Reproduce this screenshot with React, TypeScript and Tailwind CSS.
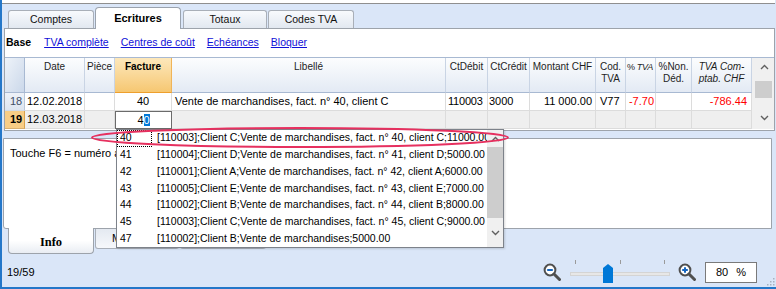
import React from 'react';

const GRID = 'grid grid-cols-[20px_60px_30px_57px_274px_42px_42px_66px_30px_30px_36px_60px]';

// header cell look
const hdrBase =
  'border-r border-b border-r-[#c9d4e4] border-b-[#a8b9d2] bg-linear-to-b from-[#fcfdfe] to-[#e3eaf4] leading-[12px] text-[#1e1e1e] text-center pt-[3px] whitespace-nowrap';
const hdr = hdrBase + ' text-[10px] overflow-hidden';

const cell = 'border-r border-b border-[#dcdcdc] text-[11px] leading-[17px] whitespace-nowrap overflow-hidden';
const cell19 = cell + ' bg-[#efefef]';

const popupRows = [
  ['40', '[110003];Client C;Vente de marchandises, fact. n° 40, client C;11000.00'],
  ['41', '[110004];Client D;Vente de marchandises, fact. n° 41, client D;5000.00'],
  ['42', '[110001];Client A;Vente de marchandises, fact. n° 42, client A;6000.00'],
  ['43', '[110005];Client E;Vente de marchandises, fact. n° 43, client E;7000.00'],
  ['44', '[110002];Client B;Vente de marchandises, fact. n° 44, client B;8000.00'],
  ['45', '[110003];Client C;Vente de marchandises, fact. n° 45, client C;9000.00'],
  ['47', '[110002];Client B;Vente de marchandises;5000.00'],
];

const Chevron = ({ up }: { up?: boolean }) => (
  <svg width="9" height="6" viewBox="0 0 9 6">
    <polyline
      points={up ? '1,5 4.5,1.5 8,5' : '1,1 4.5,4.5 8,1'}
      fill="none"
      stroke="#606060"
      strokeWidth="1.4"
    />
  </svg>
);

const Magnifier = ({ plus }: { plus?: boolean }) => (
  <svg width="18" height="18" viewBox="0 0 18 18">
    <circle cx="7" cy="7" r="5.4" fill="white" stroke="#4f4f4f" strokeWidth="2" />
    <line x1="11" y1="11" x2="16.5" y2="16.5" stroke="#4f4f4f" strokeWidth="3" strokeLinecap="round" />
    <line x1="4.2" y1="7" x2="9.8" y2="7" stroke="#1565c0" strokeWidth="2" />
    {plus && <line x1="7" y1="4.2" x2="7" y2="9.8" stroke="#1565c0" strokeWidth="2" />}
  </svg>
);

const TopTab = ({ label, active, w }: { label: string; active?: boolean; w: string }) =>
  active ? (
    <div className={`relative z-10 -mb-px h-[22px] ${w} rounded-t-[4px] border border-b-0 border-[#9aa2ad] bg-white flex items-center justify-center text-[11px] font-bold text-black`}>
      {label}
    </div>
  ) : (
    <div className={`h-[18px] ${w} rounded-t-[3px] border border-b-0 border-[#a9afb8] bg-linear-to-b from-[#f8fafd] to-[#e2e8f0] flex items-center justify-center text-[10.5px] text-[#111]`}>
      {label}
    </div>
  );

export default function App() {
  return (
    <div className="relative w-[776px] h-[289px] overflow-hidden bg-[#dae6f8] border-l-2 border-b-2 border-[#2477c9] font-['Liberation_Sans',Arial,sans-serif] text-black">
      {/* remnant of upper window */}
      <div className="h-[4px] bg-white border-b border-[#8f8f8f] mr-[1px]" />

      {/* tabs */}
      <div className="h-[24px] flex items-end pl-[6px] gap-[1px]">
        <TopTab label="Comptes" w="w-[86px]" />
        <TopTab label="Ecritures" w="w-[86px]" active />
        <TopTab label="Totaux" w="w-[84px] ml-[1px]" />
        <TopTab label="Codes TVA" w="w-[86px]" />
      </div>

      {/* main panel */}
      <div className="ml-[2px] w-[771px] h-[103px] bg-white border border-[#9da3ab]">
        <div className="h-[28px] flex items-center gap-[12px] pl-[1px] text-[10.5px]">
          <span className="font-bold">Base</span>
          <span className="ml-[1px] underline text-[#1010d8]">TVA complète</span>
          <span className="underline text-[#1010d8]">Centres de coût</span>
          <span className="underline text-[#1010d8]">Echéances</span>
          <span className="underline text-[#1010d8]">Bloquer</span>
        </div>

        <div className="flex border-t border-[#a8b9d2]">
          <div className={`${GRID} grid-rows-[35px_18px_18px] w-[747px]`}>
            {/* header */}
            <div className="border-r border-b border-[#a8b9d2] bg-linear-to-br from-[#eef3f9] to-[#cbd8ea]" />
            <div className={hdr}>Date</div>
            <div className={hdr}>Pièce</div>
            <div className="border-r border-b border-r-[#f0b458] border-b-[#ee9f2c] bg-linear-to-b from-[#fde8bb] to-[#f6c771] text-[10px] leading-[12px] text-center pt-[3px] font-bold">
              Facture
            </div>
            <div className={hdr}>Libellé</div>
            <div className={hdr}>CtDébit</div>
            <div className={hdr}>CtCrédit</div>
            <div className={hdr}>Montant CHF</div>
            <div className={hdr}>
              Cod.
              <br />
              TVA
            </div>
            <div className={hdrBase + ' text-[9px] tracking-[-0.2px]'}>
              %<i className="ml-[2px] pr-[1px]">TVA</i>
            </div>
            <div className={hdr}>
              %Non.
              <br />
              Déd.
            </div>
            <div className={hdr + ' italic'}>
              TVA Com-
              <br />
              ptab. CHF
            </div>

            {/* row 18 */}
            <div className="border-r border-b border-r-[#b9c6d8] border-b-[#d3dbe6] bg-linear-to-b from-[#eef2f8] to-[#dde5f0] text-[11px] leading-[17px] pl-[5px] text-[#3f4f66]">
              18
            </div>
            <div className={cell + ' pl-[2px]'}>12.02.2018</div>
            <div className={cell} />
            <div className={cell + ' text-center'}>40</div>
            <div className={cell + ' pl-[3px]'}>Vente de marchandises, fact. n° 40, client C</div>
            <div className={cell + ' pl-[2px] tracking-[-0.2px]'}>110003</div>
            <div className={cell + ' pl-[1px]'}>3000</div>
            <div className={cell + ' text-right pr-[3px]'}>11 000.00</div>
            <div className={cell + ' pl-[4px]'}>V77</div>
            <div className={cell + ' text-right pr-[1px] text-[#ff0000]'}>-7.70</div>
            <div className={cell} />
            <div className={cell + ' text-right pr-[4px] text-[#ff0000]'}>-786.44</div>

            {/* row 19 */}
            <div className="border-r border-b border-r-[#d9a24c] border-b-[#d9b070] bg-[#f8cd86] text-[11px] leading-[17px] pl-[5px] font-bold">
              19
            </div>
            <div className={cell19 + ' pl-[2px]'}>12.03.2018</div>
            <div className={cell19} />
            <div className="border border-[#6b6b6b] bg-white text-[11px] leading-[16px] text-center whitespace-nowrap">
              4<span className="bg-[#0078d7] text-white">0</span>
            </div>
            <div className={cell19} />
            <div className={cell19} />
            <div className={cell19} />
            <div className={cell19} />
            <div className={cell19} />
            <div className={cell19} />
            <div className={cell19} />
            <div className={cell19} />
          </div>

          {/* grid scrollbar */}
          <div className="w-[22px] h-[71px] bg-[#f0f0f0] flex flex-col">
            <div className="h-[18px] flex items-center justify-center pl-[2px]">
              <Chevron up />
            </div>
            <div className="mt-[5px] ml-[3px] w-[17px] h-[17px] bg-[#cdcdcd]" />
            <div className="flex-1" />
            <div className="h-[16px] flex items-start justify-center pl-[2px] pt-[2px]">
              <Chevron />
            </div>
          </div>
        </div>
      </div>

      {/* info panel */}
      <div className="mt-[7px] ml-[1px] w-[769px] h-[91px] bg-white border border-[#9da3ab] rounded-bl-[3px] pt-[8px] pl-[6px] text-[11px] leading-[13px]">
        Touche F6 = numéro automatique
      </div>

      {/* bottom tabs */}
      <div className="h-[25px] flex items-start pl-[6px]">
        <div className="relative z-10 -mt-px w-[86px] h-[26px] bg-linear-to-b from-white via-white to-[#e9edf3] border border-t-0 border-[#9da3ab] rounded-b-[4px] flex items-center justify-center pt-[3px] font-['Liberation_Serif',serif] font-bold text-[12.5px]">
          Info
        </div>
        <div className="ml-[1px] w-[84px] h-[20px] bg-linear-to-b from-[#e4e9f1] to-[#f6f8fb] border border-t-0 border-[#a9afb8] rounded-b-[3px] flex items-center justify-center text-[11px]">
          Messages
        </div>
        <div className="ml-[1px] w-[86px] h-[20px] bg-linear-to-b from-[#e4e9f1] to-[#f6f8fb] border border-t-0 border-[#a9afb8] rounded-b-[3px] flex items-center justify-center text-[11px]">
          Historique
        </div>
      </div>

      {/* status bar */}
      <div className="h-[33px] pt-[3px] flex items-center">
        <span className="pl-[5px] text-[11px]">19/59</span>
        <div className="ml-auto mr-[19px] flex items-center">
          <Magnifier />
          <svg className="ml-[9px]" width="100" height="24" viewBox="0 0 100 24">
            <line x1="5.5" y1="0" x2="5.5" y2="4" stroke="#9a9a9a" />
            <line x1="50.5" y1="0" x2="50.5" y2="4" stroke="#9a9a9a" />
            <line x1="94.5" y1="0" x2="94.5" y2="4" stroke="#9a9a9a" />
            <rect x="0.5" y="12.5" width="99" height="3" fill="#e7e7e7" stroke="#d4d4d4" />
            <polygon points="33,8 38,4 43,8 43,23 33,23" fill="#0078d7" />
          </svg>
          <div className="ml-[8px]">
            <Magnifier plus />
          </div>
          <div className="ml-[9px] w-[52px] h-[21px] bg-white border border-[#7a7a7a] flex items-center pl-[10px] text-[11px]">
            80<span className="ml-[8px]">%</span>
          </div>
        </div>
      </div>

      {/* resize grip */}
      <svg className="absolute right-[1px] bottom-[1px]" width="10" height="10" viewBox="0 0 10 10">
        {[
          [8, 2],
          [5, 5],
          [8, 5],
          [2, 8],
          [5, 8],
          [8, 8],
        ].map(([x, y], i) => (
          <rect key={i} x={x} y={y} width="1.5" height="1.5" fill="#a8b2c0" />
        ))}
      </svg>

      {/* autocomplete popup */}
      <div className="absolute left-[114px] top-[129px] w-[388px] h-[119px] bg-white border border-[#7d828a] flex shadow-[1px_1px_2px_rgba(0,0,0,0.15)]">
        <div className="w-[370px] flex flex-col">
          {popupRows.map(([n, t], i) => (
            <div key={n} className="h-[16.7px] flex items-center text-[10.5px] whitespace-nowrap">
              <div
                className={`w-[35px] h-full flex items-center pl-[2px] border border-dotted ${
                  i === 0 ? 'border-black' : 'border-transparent'
                }`}
              >
                {n}
              </div>
              <div className="pl-[5px] overflow-hidden flex-1">{t}</div>
            </div>
          ))}
        </div>
        <div className="w-[16px] bg-[#f0f0f0] flex flex-col">
          <div className="h-[17px] flex items-center justify-center">
            <Chevron up />
          </div>
          <div className="h-[71px] bg-[#cdcdcd]" />
          <div className="flex-1 flex items-center justify-center">
            <Chevron />
          </div>
        </div>
      </div>

      {/* red highlight ellipse */}
      <svg className="absolute left-[88px] top-[125px] pointer-events-none" width="424" height="26" viewBox="0 0 424 26">
        <ellipse cx="210" cy="12.5" rx="208" ry="9.5" fill="none" stroke="#e6305f" strokeWidth="2" />
      </svg>
    </div>
  );
}
